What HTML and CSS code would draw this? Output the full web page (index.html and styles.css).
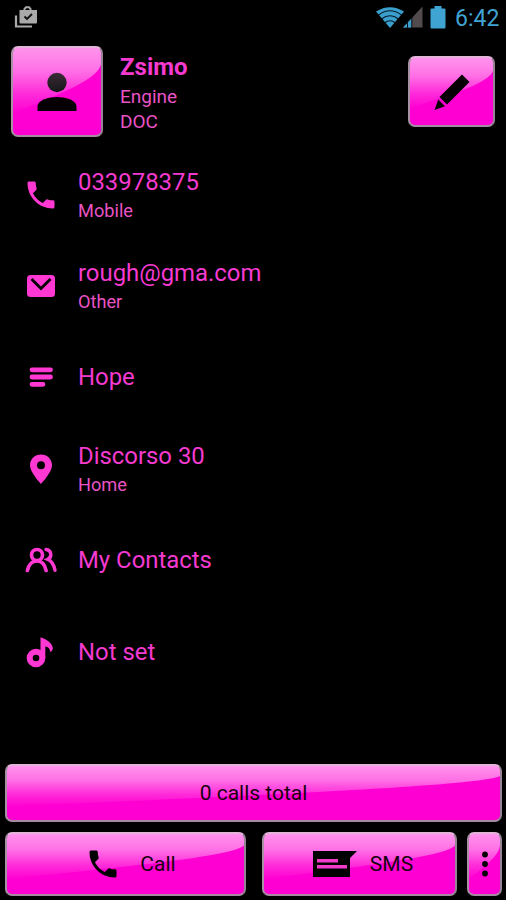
FILE: index.html
```
<!DOCTYPE html>
<html lang="en">
<head>
    <meta charset="UTF-8">
    <meta name="viewport" content="width=device-width, initial-scale=1.0">
    <title>Zsimo - Contact</title>
    <link rel="stylesheet" href="styles.css">
</head>
<body>
    <div class="status-bar">
        <svg class="status-app" width="24" height="24" viewBox="0 0 24 24">
            <path d="M2 10.500V21.500H18" fill="none" stroke="#aaa" stroke-width="2.200"/>
            <path d="M10.500 5V3.800L12 2.300H15L16.500 3.800V5" fill="none" stroke="#aaa" stroke-width="2"/>
            <path d="M5.500 5H23V17.500Q23 18.500 22 18.500H6.500Q5.500 18.500 5.500 17.500Z" fill="#aaa"/>
            <path d="M10.500 11.500L13 14L18 9" fill="none" stroke="#111" stroke-width="1.900"/>
        </svg>
        <div class="status-right">
            <svg width="48" height="24" viewBox="0 0 48 24">
                <path d="M0 6.500Q14 -2 28 6.500L14 23Z" fill="#3b9fce"/>
                <path d="M2.500 10Q14 1.500 25.500 10M5.500 14Q14 7.500 22.500 14M8.500 18Q14 13.500 19.500 18" fill="none" stroke="#061822" stroke-width="1.200"/>
                <path d="M46.500 1.500V22.500H27Z" fill="#514b4d"/>
                <path d="M35.500 13.500V22.500H27Z" fill="#3b9fce"/>
                <path d="M31.500 16V23M35.800 12V23" stroke="#06131a" stroke-width="1"/>
            </svg>
            <svg class="battery" width="16" height="24" viewBox="0 0 16 24">
                <path d="M4.500 1H11.500V3.500H14.500Q15.500 3.500 15.500 4.500V22Q15.500 23.500 14.500 23.500H1.500Q.5 23.500 .5 22V4.500Q.5 3.500 1.500 3.500H4.500Z" fill="#40a4d2"/>
            </svg>
            <span class="clock">6:42</span>
        </div>
    </div>

    <div class="header">
        <div class="glossy avatar">
            <svg width="40" height="40" viewBox="0 0 40 40">
                <defs>
                    <linearGradient id="head" x1="0" y1="0" x2="0" y2="1">
                        <stop offset="0" stop-color="#3c2c38"/>
                        <stop offset="1" stop-color="#161616"/>
                    </linearGradient>
                </defs>
                <circle cx="20" cy="10.500" r="9.700" fill="url(#head)"/>
                <path d="M.5 39V34.500C.5 28 12 25 20 25S39.500 28 39.500 34.500V39Z" fill="#050004"/>
            </svg>
        </div>
        <div class="person">
            <h1>Zsimo</h1>
            <div>Engine</div>
            <div>DOC</div>
        </div>
        <button class="glossy edit" aria-label="Edit">
            <svg width="36" height="36" viewBox="0 0 36 36">
                <path d="M28 .5L35.500 8L13 30.500L5.500 23ZM4.300 25.500L11 32.200L.5 36Z" fill="#060005"/>
            </svg>
        </button>
    </div>

    <ul class="details">
        <li>
            <svg width="36" height="36" viewBox="0 0 24 24"><path class="fill" d="M6.620 10.790c1.440 2.830 3.760 5.140 6.590 6.590l2.200-2.200c.27-.27.67-.36 1.020-.24 1.120.37 2.330.57 3.570.57.550 0 1 .45 1 1V20c0 .55-.45 1-1 1-9.390 0-17-7.610-17-17 0-.55.450-1 1-1h3.500c.55 0 1 .45 1 1 0 1.250.2 2.450.57 3.570.11.35.030.740-.25 1.020l-2.200 2.200z"/></svg>
            <div class="pair">
                <div class="value">033978375</div>
                <div class="label">Mobile</div>
            </div>
        </li>
        <li>
            <svg width="36" height="36" viewBox="0 0 36 36">
                <rect class="fill" x="4" y="7" width="28" height="22" rx="3.500"/>
                <path d="M8.500 11L18 20.500L27.500 11" fill="none" stroke="#000" stroke-width="2.800"/>
            </svg>
            <div class="pair">
                <div class="value">rough@gma.com</div>
                <div class="label">Other</div>
            </div>
        </li>
        <li>
            <svg width="36" height="36" viewBox="0 0 36 36"><path class="line" stroke-width="4.800" d="M9 10.800H27.500M9 18H27.500M9 25.300H20"/></svg>
            <div class="value">Hope</div>
        </li>
        <li>
            <svg width="36" height="36" viewBox="0 0 36 36"><path class="fill" fill-rule="evenodd" d="M18 3.500C11.700 3.500 7 8.200 7 14.300C7 21.500 18 33 18 33S29 21.500 29 14.300C29 8.200 24.300 3.500 18 3.500ZM18 10.200A4 4 0 1 1 18 18.200A4 4 0 1 1 18 10.200Z"/></svg>
            <div class="pair">
                <div class="value">Discorso 30</div>
                <div class="label">Home</div>
            </div>
        </li>
        <li>
            <svg width="36" height="36" viewBox="0 0 36 36">
                <circle class="line" stroke-width="3.700" cx="14" cy="13" r="5.500"/>
                <path class="line" stroke-width="3.700" d="M4.400 28.500C5.500 23 9 19 14 19S22 23 23.100 28.500"/>
                <path class="line" stroke-width="3.400" d="M23 7.500C28.500 8 29.500 15 24.800 17.300C29 19 31 23 32 28.300"/>
            </svg>
            <div class="value">My Contacts</div>
        </li>
        <li>
            <svg width="36" height="36" viewBox="0 0 36 36">
                <circle class="line" stroke-width="6" cx="13" cy="24" r="6.300"/>
                <path class="fill" d="M17.500 24V3.500C20 3.200 29.500 8.500 29.800 14C29.900 16 28.500 17.500 27.300 18C27 14.500 25 12.800 22.300 12.500V24Z"/>
            </svg>
            <div class="value">Not set</div>
        </li>
    </ul>

    <div class="footer">
        <button class="glossy total">0 calls total</button>
        <button class="glossy">
            <svg class="call-icon" width="36" height="36" viewBox="0 0 24 24"><path d="M6.620 10.790c1.440 2.830 3.760 5.140 6.590 6.590l2.200-2.200c.27-.27.67-.36 1.020-.24 1.120.37 2.330.57 3.570.57.550 0 1 .45 1 1V20c0 .55-.45 1-1 1-9.390 0-17-7.610-17-17 0-.55.450-1 1-1h3.500c.55 0 1 .45 1 1 0 1.250.2 2.450.57 3.570.11.35.030.740-.25 1.020l-2.200 2.200z"/></svg>
            <span>Call</span>
        </button>
        <button class="glossy sms">
            <svg width="44" height="26" viewBox="0 0 44 26">
                <path d="M0 0H44L37 7V26H0Z"/>
                <path d="M4 9.800H25M4 15.800H34" stroke="#f03cc8" stroke-width="3.400"/>
            </svg>
            <span>SMS</span>
        </button>
        <button class="glossy more" aria-label="More">
            <svg width="8" height="28" viewBox="0 0 8 28"><circle cx="4" cy="4.500" r="2.900"/><circle cx="4" cy="14" r="2.900"/><circle cx="4" cy="23.500" r="2.900"/></svg>
        </button>
    </div>
</body>
</html>
```
FILE: styles.css
```
* {
    box-sizing: border-box;
}

body {
    background-color: #000;
    color: #f53ad0;
    font-family: Roboto, sans-serif;
    margin: 0;
    height: 900px;
    display: flex;
    flex-direction: column;
    overflow: hidden;
}

svg {
    display: block;
    flex: none;
}

.status-bar {
    height: 40px;
    padding: 5px 9px 0 14px;
    display: flex;
    justify-content: space-between;
    align-items: flex-start;
}

.status-right {
    display: flex;
}

.battery {
    margin: 0 9px 0 6px;
}

.clock {
    color: #40a4d2;
    font-size: 23px;
    line-height: 28px;
    width: 42px;
    white-space: nowrap;
}

/* shiny pink panel, the curve is the light reflection */
.glossy {
    display: flex;
    align-items: center;
    justify-content: center;
    padding: 0;
    border: 2px solid;
    border-color: #e3b4da #968393 #a58aa1 #a792a4;
    border-radius: 7px;
    color: #19000f;
    font-family: Roboto, sans-serif;
    font-size: 21px;
    background-color: #ff00d2;
    background-image: url("data:image/svg+xml,%3Csvg xmlns='http://www.w3.org/2000/svg' viewBox='0 0 100 100' preserveAspectRatio='none'%3E%3Cdefs%3E%3ClinearGradient id='g' gradientUnits='userSpaceOnUse' x1='0' y1='0' x2='0' y2='75'%3E%3Cstop offset='0' stop-color='%23fff' stop-opacity='.58'/%3E%3Cstop offset='.35' stop-color='%23fff' stop-opacity='.44'/%3E%3Cstop offset='.7' stop-color='%23fff' stop-opacity='.17'/%3E%3Cstop offset='1' stop-color='%23fff' stop-opacity='0'/%3E%3C/linearGradient%3E%3C/defs%3E%3Cpath d='M0 0H100V19C97 30 80 41 50 54Q25 65 0 75Z' fill='url(%23g)'/%3E%3C/svg%3E");
    background-size: 100% 100%;
    background-repeat: no-repeat;
    background-origin: padding-box;
}

.header {
    height: 108px;
    padding: 6px 11px 0 11px;
    display: flex;
    align-items: flex-start;
}

.avatar {
    width: 92px;
    height: 91px;
    flex: none;
}

.person {
    flex: 1;
    padding: 7px 0 0 17px;
    font-size: 19px;
    line-height: 25px;
    color: #e953c4;
}

.person h1 {
    margin: 0 0 2px;
    font-size: 24px;
    line-height: 29px;
    color: #f53ad0;
}

.edit {
    width: 87px;
    height: 71px;
    margin-top: 10px;
}

.details {
    list-style: none;
    margin: 0;
    padding: 1px 0 0;
}

.details li {
    height: 91.4px;
    padding-left: 23px;
    display: flex;
    align-items: center;
    gap: 19px;
}

.pair {
    padding-top: 2px;
}

.value {
    font-size: 23.9px;
    line-height: 30px;
}

.label {
    font-size: 18.2px;
    line-height: 28px;
    color: #e953c4;
}

.fill {
    fill: #ff38d4;
}

.line {
    fill: none;
    stroke: #ff38d4;
    stroke-linecap: round;
}

.footer {
    margin-top: auto;
    padding: 0 4px 4px 5px;
    display: grid;
    grid-template-columns: 241px 201px 35px;
    grid-template-rows: 58px 64px;
    gap: 10px;
}

.total {
    grid-column: 1 / 4;
}

.call-icon {
    margin-right: 19px;
    margin-left: 10px;
}

.sms {
    margin-left: 6px;
}

.sms svg {
    margin: 0 13px 0 7px;
}
```
